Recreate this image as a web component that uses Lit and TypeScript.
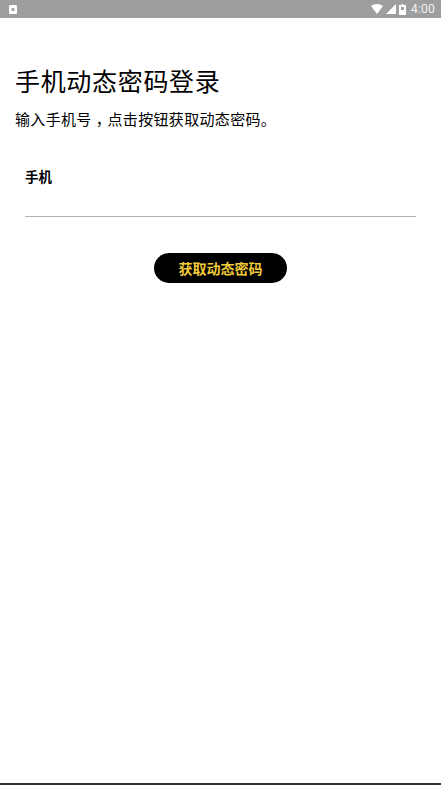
import { LitElement, html, css } from "lit";
import { customElement } from "lit/decorators.js";

@customElement("app-root")
export class AppRoot extends LitElement {
  static styles = css`
    :host {
      display: flex;
      flex-direction: column;
      width: 441px;
      height: 785px;
      background: #fff;
      overflow: hidden;
      font-family: "Noto Sans CJK SC", "Noto Sans", sans-serif;
      color: #000;
    }
    .status {
      height: 18px;
      flex: none;
      background: #9e9e9e;
      display: flex;
      align-items: center;
      padding: 0 6px 0 9px;
      color: #fff;
    }
    .notif { width: 8px; height: 9px; display: block; }
    .spacer { flex: 1; }
    .sys { display: flex; align-items: center; }
    .wifi { width: 12px; height: 10px; display: block; margin-right: 3px; }
    .cell { width: 10px; height: 10px; display: block; margin-right: 3px; }
    .batt { width: 7px; height: 11px; display: block; margin-right: 5px; }
    .time { font: 12px/18px Roboto, sans-serif; letter-spacing: 0.2px; color: #f2f2f2; }
    .main { flex: 1; display: flex; flex-direction: column; }
    h1 {
      margin: 46px 0 0 15px;
      font-size: 25px;
      line-height: 32px;
      font-weight: 400;
      color: #000;
      letter-spacing: 0.68px;
    }
    .hint {
      margin: 12px 0 0 15px;
      font-size: 15px;
      line-height: 22px;
      color: #000;
      letter-spacing: 0.33px;
    }
    .comma {
      font-feature-settings: "halt";
      margin: 0 4px;
    }
    .field {
      margin: 36px 25px 0 25px;
      height: 50px;
      border-bottom: 1px solid #b4b4b4;
    }
    .label {
      font-size: 13.5px;
      line-height: 20px;
      font-weight: 700;
      color: #000;
    }
    .btn-row { display: flex; justify-content: center; margin-top: 36px; }
    .btn {
      width: 133px;
      height: 30px;
      border: none;
      border-radius: 15px;
      background: #000;
      color: #f2cb3a;
      font-family: inherit;
      font-size: 14px;
      font-weight: 700;
      padding: 0;
      display: flex;
      align-items: center;
      justify-content: center;
    }
    .bottom { height: 2px; flex: none; background: #333; }
  `;

  render() {
    return html`
      <div class="status">
        <svg class="notif" viewBox="0 0 8 9"><rect width="8" height="9" rx="1" fill="#fff"/><rect x="2.500" y="3" width="3" height="3" fill="#aaa"/></svg>
        <div class="spacer"></div>
        <div class="sys">
          <svg class="wifi" viewBox="0 0 12 10"><path fill="#fff" d="M0 2C1.700.7 3.700 0 6 0s4.300.7 6 2L6 10z"/></svg>
          <svg class="cell" viewBox="0 0 10 10"><path fill="#fff" d="M10 0v10H0z"/></svg>
          <svg class="batt" viewBox="0 0 7 11"><path fill="#fff" fill-rule="evenodd" d="M2.500 0h2v1H7v10H0V1h2.500zM2 3v3h3V3z"/></svg>
          <span class="time">4:00</span>
        </div>
      </div>
      <div class="main">
        <h1>手机动态密码登录</h1>
        <div class="hint">输入手机号<span class="comma">，</span>点击按钮获取动态密码。</div>
        <div class="field"><div class="label">手机</div></div>
        <div class="btn-row"><button class="btn">获取动态密码</button></div>
      </div>
      <div class="bottom"></div>
    `;
  }
}
